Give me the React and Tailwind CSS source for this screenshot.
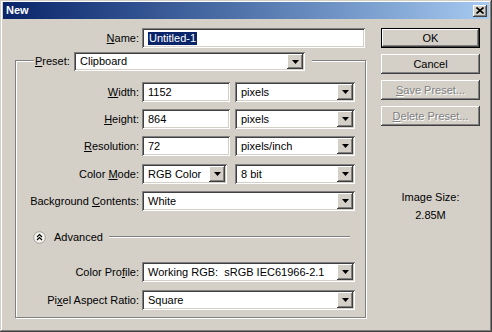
import React from "react";

const sunken =
  "shadow-[inset_1px_1px_0_#808080,inset_-1px_-1px_0_#ffffff,inset_2px_2px_0_#404040,inset_-2px_-2px_0_#d4d0c8]";
const raised =
  "shadow-[inset_-1px_-1px_0_#404040,inset_1px_1px_0_#ffffff,inset_-2px_-2px_0_#808080,inset_2px_2px_0_#d4d0c8]";

function Arrow() {
  return (
    <div className={`w-[16px] h-full bg-[#d4d0c8] flex items-center justify-center ${raised}`}>
      <svg width="7" height="4" viewBox="0 0 7 4">
        <path d="M0 0h7L3.5 4z" fill="#000" />
      </svg>
    </div>
  );
}

function Combo({ w, value, h = "h-[20px]" }) {
  return (
    <div className={`${w} ${h} shrink-0 bg-white p-[2px] flex ${sunken}`}>
      <div className="flex-1 pl-[4px] flex items-center whitespace-pre overflow-hidden">
        {value}
      </div>
      <Arrow />
    </div>
  );
}

function Field({ w, value }) {
  return (
    <div className={`${w} h-[20px] shrink-0 bg-white p-[2px] flex items-center ${sunken}`}>
      <span className="pl-[4px]">{value}</span>
    </div>
  );
}

function Label({ children }) {
  return (
    <div className="w-[126px] shrink-0 pr-[3px] text-right whitespace-nowrap">{children}</div>
  );
}

function Button({ children, top, isDefault, disabled }) {
  return (
    <div
      className={`${top} w-[99px] h-[20px] flex items-center justify-center bg-[#d4d0c8] ${
        isDefault ? "border border-black" : ""
      } ${raised} ${disabled ? "text-[#808080] [text-shadow:1px_1px_0_#ffffff]" : ""}`}
    >
      {children}
    </div>
  );
}

export default function App() {
  return (
    <div
      className="w-[492px] h-[332px] bg-[#d4d0c8] px-[3px] pt-[2px] text-[11px] leading-[13px] text-black shadow-[inset_-1px_-1px_0_#404040,inset_1px_1px_0_#d4d0c8,inset_-2px_-2px_0_#808080,inset_2px_2px_0_#ffffff]"
      style={{ fontFamily: '"Liberation Sans", Arial, sans-serif' }}
    >
      {/* Title bar */}
      <div className="h-[17px] bg-linear-to-r from-[#0a246a] to-[#a6caf0] flex items-center pl-[3px] pr-[2px]">
        <span className="text-white font-bold">New</span>
        <div className={`ml-auto w-[14px] h-[12px] bg-[#d4d0c8] flex items-center justify-center ${raised}`}>
          <svg width="8" height="7" viewBox="0 0 8 7">
            <path d="M0.5 0.5L7.5 6.5M7.5 0.5L0.5 6.5" stroke="#000" strokeWidth="1.6" />
          </svg>
        </div>
      </div>

      <div className="flex">
        {/* Left column */}
        <div className="w-[370px] shrink-0">
          <div className="mt-[9px] flex items-center">
            <div className="w-[139px] pr-[3px] text-right">
              <u>N</u>ame:
            </div>
            <div className={`w-[223px] h-[20px] bg-white p-[2px] flex items-center ${sunken}`}>
              <span className="ml-[4px] px-[1px] bg-[#0a246a] text-white">Untitled-1</span>
            </div>
          </div>

          {/* Preset group */}
          <div className="mt-[12px] ml-[12px] w-[351px] h-[258px] border border-[#808080] shadow-[1px_1px_0_#ffffff,inset_1px_1px_0_#ffffff]">
            <div className="-mt-[9px] ml-[18px] w-[278px] h-[19px] pr-[7px] bg-[#d4d0c8] flex items-center">
              <div className="w-[40px] pl-[1px]">
                <u>P</u>reset:
              </div>
              <Combo w="w-[231px]" h="h-[19px]" value="Clipboard" />
            </div>

            <div className="mt-[11px] flex items-center">
              <Label>
                <u>W</u>idth:
              </Label>
              <Field w="w-[88px]" value="1152" />
              <div className="ml-[5px]">
                <Combo w="w-[120px]" value="pixels" />
              </div>
            </div>

            <div className="mt-[7px] flex items-center">
              <Label>
                <u>H</u>eight:
              </Label>
              <Field w="w-[88px]" value="864" />
              <div className="ml-[5px]">
                <Combo w="w-[120px]" value="pixels" />
              </div>
            </div>

            <div className="mt-[7px] flex items-center">
              <Label>
                <u>R</u>esolution:
              </Label>
              <Field w="w-[88px]" value="72" />
              <div className="ml-[5px]">
                <Combo w="w-[120px]" value="pixels/inch" />
              </div>
            </div>

            <div className="mt-[8px] flex items-center">
              <Label>
                Color <u>M</u>ode:
              </Label>
              <Combo w="w-[85px]" value="RGB Color" />
              <div className="ml-[8px]">
                <Combo w="w-[120px]" value="8 bit" />
              </div>
            </div>

            <div className="mt-[7px] flex items-center">
              <Label>
                Background <u>C</u>ontents:
              </Label>
              <Combo w="w-[213px]" value="White" />
            </div>

            {/* Advanced */}
            <div className="mt-[18px] h-[16px] ml-[17px] mr-[15px] flex items-center">
              <svg width="13" height="13" viewBox="0 0 13 13" className="shrink-0">
                <circle cx="6.5" cy="6.5" r="5.8" fill="#f4f3ee" stroke="#9a9890" strokeWidth="0.9" />
                <path d="M4 6L6.5 3.6L9 6M4 9L6.5 6.6L9 9" fill="none" stroke="#000" strokeWidth="1.2" />
              </svg>
              <span className="ml-[8px]">Advanced</span>
              <div className="ml-[6px] flex-1 h-0 border-t border-b border-t-[#808080] border-b-white" />
            </div>

            <div className="mt-[17px] flex items-center">
              <Label>
                Color Pro<u>f</u>ile:
              </Label>
              <Combo w="w-[213px]" value="Working RGB:  sRGB IEC61966-2.1" />
            </div>

            <div className="mt-[8px] flex items-center">
              <Label>
                Pi<u>x</u>el Aspect Ratio:
              </Label>
              <Combo w="w-[213px]" value="Square" />
            </div>
          </div>
        </div>

        {/* Right column */}
        <div className="ml-[8px] w-[99px] flex flex-col">
          <Button top="mt-[9px]" isDefault>
            OK
          </Button>
          <Button top="mt-[6px]">Cancel</Button>
          <Button top="mt-[6px]" disabled>
            <span>
              <u>S</u>ave Preset...
            </span>
          </Button>
          <Button top="mt-[6px]" disabled>
            <span>
              <u>D</u>elete Preset...
            </span>
          </Button>
          <div className="mt-[65px] text-center">Image Size:</div>
          <div className="mt-[5px] text-center">2.85M</div>
        </div>
      </div>
    </div>
  );
}
